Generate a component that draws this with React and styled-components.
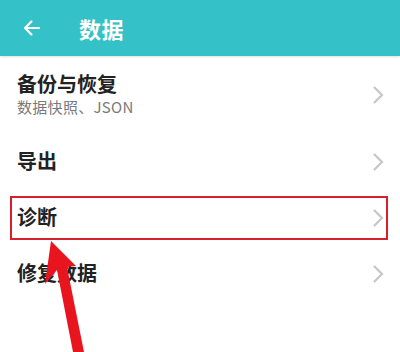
import React from "react";
import styled, { createGlobalStyle } from "styled-components";

const Global = createGlobalStyle`
  html, body { margin: 0; padding: 0; background: #ffffff; }
  body { font-family: "Noto Sans", "Noto Sans CJK SC", sans-serif; }
`;

const Screen = styled.div`
  position: relative;
  width: 400px;
  height: 352px;
  overflow: hidden;
  background: #ffffff;
`;

const Header = styled.header`
  height: 56px;
  background: #34c1c7;
  display: flex;
  align-items: center;
  padding-left: 21px;
  gap: 36px;
  box-shadow: 0 1px 2px rgba(0, 0, 0, 0.12);
`;

const BackButton = styled.div`
  width: 22px;
  height: 22px;
  display: flex;
  align-items: center;
  justify-content: center;
`;

const Title = styled.h1`
  margin: 0;
  color: #ffffff;
  font-family: "Noto Sans CJK SC", sans-serif;
  font-size: 22px;
  font-weight: 700;
  letter-spacing: 0.5px;
`;

const List = styled.div`
  display: flex;
  flex-direction: column;
`;

const Row = styled.div`
  position: relative;
  height: ${(p) => (p.$tall ? "78px" : "56px")};
  display: flex;
  align-items: center;
  justify-content: space-between;
  padding: 0 16px 0 17px;
  &::after {
    content: "";
    display: ${(p) => (p.$highlight ? "block" : "none")};
    position: absolute;
    left: 10px;
    right: 12px;
    top: 6px;
    bottom: 6px;
    border: 2px solid #d8202c;
  }
`;

const Texts = styled.div`
  display: flex;
  flex-direction: column;
  gap: 0;
  margin-top: -2px;
`;

const RowTitle = styled.div`
  font-family: "Noto Sans CJK SC", sans-serif;
  font-size: 20px;
  font-weight: 700;
  color: #222222;
  line-height: 26px;
`;

const RowSub = styled.div`
  font-family: "Noto Sans CJK SC", sans-serif;
  font-size: 15px;
  color: #7a7a7a;
  line-height: 20px;
  letter-spacing: 0.3px;
`;

const Arrow = styled.svg`
  position: absolute;
  left: 0;
  top: 0;
  pointer-events: none;
`;

const Chevron = () => (
  <svg width="12" height="20" viewBox="0 0 12 20">
    <path d="M2 2 L10 10 L2 18" fill="none" stroke="#c6c6c6" strokeWidth="2.2" />
  </svg>
);

const items = [
  { title: "备份与恢复", sub: "数据快照、JSON", tall: true },
  { title: "导出" },
  { title: "诊断", highlight: true },
  { title: "修复数据" },
];

export default function App() {
  return (
    <Screen>
      <Global />
      <Header>
        <BackButton>
          <svg width="20" height="20" viewBox="0 0 20 20">
            <path
              d="M17 10 H3.5 M9.5 3.5 L3 10 L9.5 16.5"
              fill="none"
              stroke="#ffffff"
              strokeWidth="2.2"
              strokeLinecap="round"
              strokeLinejoin="round"
            />
          </svg>
        </BackButton>
        <Title>数据</Title>
      </Header>
      <List>
        {items.map((it) => (
          <Row key={it.title} $tall={it.tall} $highlight={it.highlight}>
            <Texts>
              <RowTitle>{it.title}</RowTitle>
              {it.sub && <RowSub>{it.sub}</RowSub>}
            </Texts>
            <Chevron />
          </Row>
        ))}
      </List>
      <Arrow width="400" height="352" viewBox="0 0 400 352">
        <polygon
          points="51,241 76,266 67,267 84,352 73,352 57,270 45,284"
          fill="#e8151f"
        />
      </Arrow>
    </Screen>
  );
}
